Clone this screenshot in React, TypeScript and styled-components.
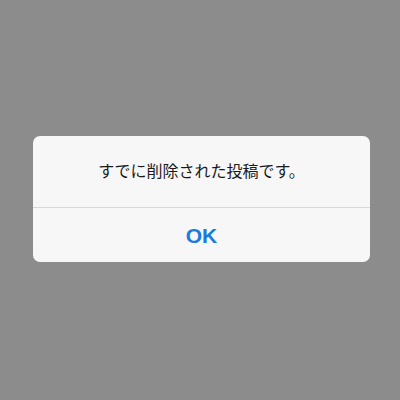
import React from "react";
import styled, { createGlobalStyle } from "styled-components";

const Global = createGlobalStyle`
  html, body { margin: 0; padding: 0; }
  body { background: #8c8c8c; }
`;

const Screen = styled.div`
  width: 400px;
  height: 400px;
  background: #8c8c8c;
  display: flex;
  justify-content: center;
  padding-top: 136px;
  box-sizing: border-box;
`;

const Dialog = styled.div`
  width: 337px;
  height: 126px;
  margin-left: 3px;
  background: #f7f7f7;
  border-radius: 7px;
  display: flex;
  flex-direction: column;
  overflow: hidden;
`;

const Message = styled.div`
  height: 72px;
  display: flex;
  align-items: center;
  justify-content: center;
  font-family: "Noto Sans CJK JP", sans-serif;
  font-size: 16px;
  color: #1a1a1a;
  border-bottom: 1px solid #d8d8d8;
  padding-bottom: 3px;
  box-sizing: border-box;
`;

const Button = styled.div`
  flex: 1;
  display: flex;
  align-items: center;
  justify-content: center;
  font-family: "Liberation Sans", Arial, sans-serif;
  font-weight: bold;
  font-size: 21px;
  color: #1a7ae0;
  padding-top: 2px;
`;

export default function App() {
  return (
    <>
      <Global />
      <Screen>
        <Dialog>
          <Message>すでに削除された投稿です。</Message>
          <Button>OK</Button>
        </Dialog>
      </Screen>
    </>
  );
}
